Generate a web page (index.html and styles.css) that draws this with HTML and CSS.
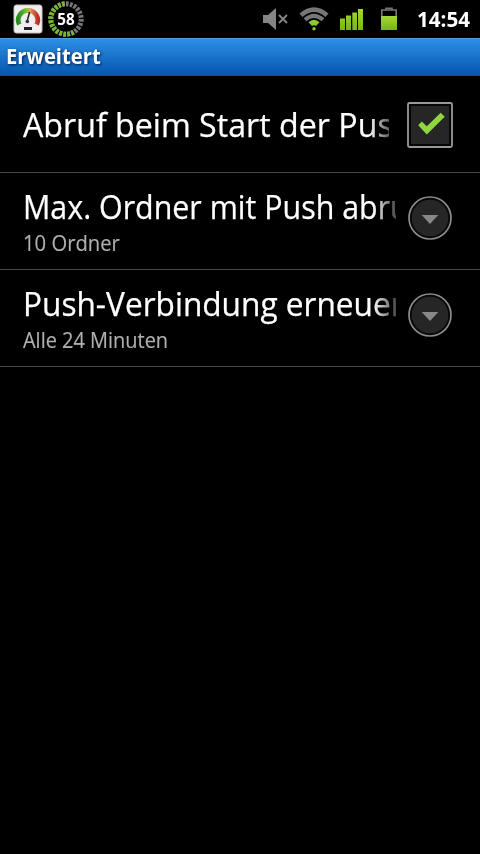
FILE: index.html
```html
<!DOCTYPE html>
<html lang="de">
<head>
<meta charset="utf-8">
<title>Erweitert</title>
<link rel="stylesheet" href="styles.css">
</head>
<body>
<header class="status">
  <svg class="gauge" width="30" height="30" viewBox="0 0 30 30">
    <defs><linearGradient id="arc"><stop offset="0" stop-color="#278d20"/><stop offset=".45" stop-color="#86c43a"/><stop offset=".6" stop-color="#e0a060"/><stop offset="1" stop-color="#c22d25"/></linearGradient></defs>
    <rect x="1" y="1" width="28" height="28" rx="2.5" fill="#f0eeee" stroke="#c9c3c9"/>
    <path d="M6.3 20.5A9.7 9.7 0 1 1 23.7 20.5" fill="none" stroke="url(#arc)" stroke-width="4.8"/>
    <path d="M14 18L16.6 8" stroke="#222" stroke-width="1.5"/>
    <circle cx="14.3" cy="17.5" r="1.8" fill="#333"/>
    <rect x="11" y="23" width="8" height="3" fill="#222"/>
  </svg>
  <div class="dial">
    <svg width="38" height="38" viewBox="0 0 38 38">
      <circle cx="19" cy="19" r="15.2" fill="none" stroke="#77777c" stroke-width="5" pathLength="96" stroke-dasharray="2.7 1.3" transform="rotate(-90 19 19)"/>
      <circle cx="19" cy="19" r="15.2" fill="none" stroke="#73b82f" stroke-width="5" pathLength="96" stroke-dasharray="2.7 1.3 2.7 1.3 2.7 1.3 2.7 1.3 2.7 1.3 2.7 1.3 2.7 1.3 2.7 1.3 2.7 1.3 2.7 1.3 2.7 1.3 2.7 1.3 2.7 1.3 2.7 43" transform="rotate(60 19 19)"/>
    </svg>
    <span class="dial-value">58</span>
  </div>
  <div class="spacer"></div>
  <svg class="mute" width="26" height="24" viewBox="0 0 26 24">
    <path d="M1 8H6L14 1V23L6 16H1Z" fill="#858585"/>
    <path d="M17 8L25 16M25 8L17 16" stroke="#858585" stroke-width="1.8"/>
  </svg>
  <svg class="wifi" width="30" height="24" viewBox="0 0 30 24">
    <path d="M2 8.3Q15-3 28 8.3" fill="none" stroke="#777" stroke-width="4.6"/>
    <path d="M6 12.8Q15 4.8 24 12.8" fill="none" stroke="#777" stroke-width="4"/>
    <path d="M9.5 15.3Q15 10.2 20.5 15.3L17 19Q15 17.5 13 19Z" fill="#87cb32"/>
    <circle cx="15" cy="21.7" r="1.7" fill="#87cb32"/>
  </svg>
  <svg class="signal" width="24" height="22" viewBox="0 0 24 22">
    <defs><linearGradient id="green" x2="0" y2="1"><stop stop-color="#a3d836"/><stop offset="1" stop-color="#79b513"/></linearGradient></defs>
    <path d="M0 10.5H5V22H0ZM6 7.5H11V22H6ZM12.3 4.5H17V22H12.3ZM18 1H23V22H18Z" fill="url(#green)"/>
  </svg>
  <svg class="battery" width="16" height="24" viewBox="0 0 16 24">
    <path d="M5 3V1.2H11V3M.8 23V3H15.2V23" fill="none" stroke="#777" stroke-width="1.6"/>
    <rect x="0" y="9" width="16" height="14" fill="url(#green)"/>
  </svg>
  <span class="clock">14:54</span>
</header>
<h1 class="title"><span class="title-text">Erweitert</span></h1>
<main>
  <section class="row row-check">
    <div class="label fade-short"><div class="name name-check">Abruf beim Start der Push</div></div>
    <svg class="check" width="48" height="48" viewBox="0 0 48 48">
      <rect x="2" y="2" width="44" height="44" rx="1.5" fill="#050505" stroke="#999" stroke-width="1.8"/>
      <rect x="5" y="5" width="38" height="38" fill="#262626"/>
      <path d="M12.2 24.3L15.8 20.5L20.8 25.2L34.7 11.8L38.7 15.8L20.8 33.5Z" fill="#91d63f"/>
    </svg>
  </section>
  <section class="row">
    <div class="label"><div class="name name-max">Max. Ordner mit Push abrufen</div><div class="summary summary-max">10 Ordner</div></div>
    <svg class="more" width="46" height="46" viewBox="0 0 46 46">
      <circle cx="23" cy="23" r="21" fill="#080808" stroke="#8c8c8c" stroke-width="1.7"/>
      <circle cx="23" cy="23" r="18.3" fill="#262626"/><path d="M14.7 20H31.3L23 29Z" fill="#888"/>
    </svg>
  </section>
  <section class="row">
    <div class="label"><div class="name name-push">Push-Verbindung erneuern</div><div class="summary summary-push">Alle 24 Minuten</div></div>
    <svg class="more" width="46" height="46" viewBox="0 0 46 46">
      <circle cx="23" cy="23" r="21" fill="#080808" stroke="#8c8c8c" stroke-width="1.7"/>
      <circle cx="23" cy="23" r="18.3" fill="#262626"/><path d="M14.7 20H31.3L23 29Z" fill="#888"/>
    </svg>
  </section>
</main>
</body>
</html>
```
FILE: styles.css
```css
* { box-sizing: border-box; }
body { margin: 0; min-height: 854px; background: #000; color: #fff; font-family: "Open Sans", "Noto Sans", sans-serif; overflow: hidden; }
.status { height: 38px; display: flex; align-items: center; }
.status svg { display: block; flex: none; }
.gauge { margin-left: 13px; }
.dial { position: relative; margin-left: 4px; width: 38px; height: 38px; }
.dial-value { position: absolute; inset: 0; text-align: center; font: bold 16px/38px "Open Sans", sans-serif; transform: scaleX(.95); }
.spacer { flex: 1; }
.mute { margin-right: 11px; }
.wifi { margin-right: 11px; }
.signal { margin-right: 17px; }
.battery { margin-right: 20px; }
.clock { width: 63px; font-size: 21px; line-height: 38px; font-weight: bold; white-space: nowrap; transform: scaleX(.98); transform-origin: 0 50%; }
.title { margin: 0; height: 38px; padding-left: 6px; font-size: 21px; line-height: 35px; background: linear-gradient(#2c8fe5, #0758b0 94%, #155499); border-top: 1px solid #4b9de4; }
.title-text { display: inline-block; text-shadow: 1px 1px 3px #001c44; transform: scaleX(.965); transform-origin: 0 50%; }
.row { height: 97px; display: flex; align-items: center; border-bottom: 1px solid #454545; }
.label { width: 373px; margin-left: 23px; overflow: hidden; flex: none; mask-image: linear-gradient(90deg, #000 350px, transparent 382px); }
.fade-short { width: 366px; mask-image: linear-gradient(90deg, #000 346px, transparent 378px); }
.name { font-size: 33px; line-height: 39px; height: 41px; white-space: nowrap; transform-origin: 0 50%; width: max-content; -webkit-text-stroke: .25px #fff; }
.name-check { line-height: 41px; transform: scaleX(.975); }
.name-max { transform: scaleX(.921); }
.name-push { transform: scaleX(.958); }
.summary { font-size: 22px; line-height: 28px; color: #b0b0b0; white-space: nowrap; transform-origin: 0 50%; width: max-content; -webkit-text-stroke: .15px #b0b0b0; }
.summary-max { transform: scaleX(.92); }
.summary-push { transform: scaleX(.907); }
.check { margin: 2px 0 0 17px; }
.more { margin: 0 0 6px 11px; }
```
